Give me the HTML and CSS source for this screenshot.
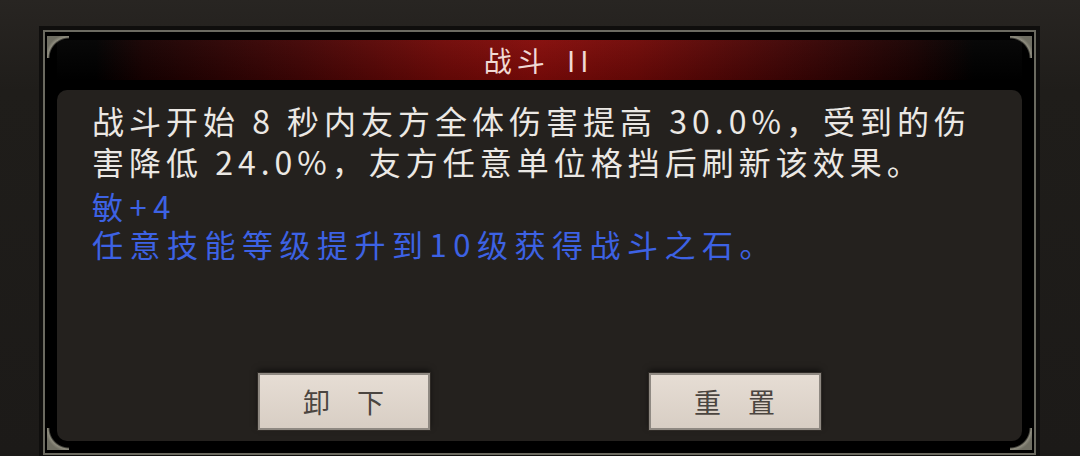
FILE: index.html
```html
<!DOCTYPE html>
<html lang="zh-CN">
<head>
    <meta charset="UTF-8">
    <meta name="viewport" content="width=device-width, initial-scale=1.0">
    <title>战斗 II</title>
    <link rel="stylesheet" href="styles.css">
</head>

<body>
    <div class="frame">
        <div class="frame-line">
            <div class="sheet">
                <!-- 标题栏 -->
                <div class="title-bar">
                    <span class="title">战斗 II</span>
                </div>

                <!-- 说明面板 -->
                <div class="panel">
                    <p class="desc">战斗开始 8 秒内友方全体伤害提高 30.0%，受到的伤害降低 24.0%，友方任意单位格挡后刷新该效果。</p>
                    <p class="bonus">敏+4<br>任意技能等级提升到10级获得战斗之石。</p>

                    <div class="actions">
                        <button class="btn">卸下</button>
                        <button class="btn">重置</button>
                    </div>
                </div>
            </div>
        </div>
    </div>
</body>
</html>
```

FILE: styles.css
```css
html, body {
    height: 456px;
    overflow: hidden;
}

body {
    margin: 0;
    padding: 26px 40px 0 39px;
    box-sizing: border-box;
    font-family: "Noto Sans CJK SC", "Noto Sans", sans-serif;
    background: linear-gradient(180deg, #282522 0%, #1f1d1a 20%, #1c1a18 100%);
}

.frame {
    border: 4px solid #0f0e0d;
    background-color: #000;
}

.frame-line {
    border: 2px solid #6b6a60;
    padding: 4px 2px 3px 2px;
    background-color: #000;
}

/* 四角的灰色装饰 */
.sheet {
    display: flex;
    flex-direction: column;
    height: 414px;
    box-sizing: border-box;
    padding: 4px 10px 9px 10px;
    background:
        radial-gradient(circle at 100% 100%, rgba(0,0,0,0) 19px, #8f8d7f 21px, #6f6e62 24px) top left / 22px 22px no-repeat,
        radial-gradient(circle at 0 100%, rgba(0,0,0,0) 19px, #8f8d7f 21px, #6f6e62 24px) top right / 22px 22px no-repeat,
        radial-gradient(circle at 100% 0, rgba(0,0,0,0) 19px, #8f8d7f 21px, #6f6e62 24px) bottom left / 22px 22px no-repeat,
        radial-gradient(circle at 0 0, rgba(0,0,0,0) 19px, #8f8d7f 21px, #6f6e62 24px) bottom right / 22px 22px no-repeat,
        #000;
}

.title-bar {
    height: 40px;
    display: flex;
    align-items: center;
    justify-content: center;
    background:
        linear-gradient(180deg, rgba(255,255,255,0.03), rgba(0,0,0,0.15)),
        linear-gradient(90deg,
            rgba(90,4,4,0) 0%,
            rgba(90,4,4,0) 4%,
            #180101 9%,
            #420505 25%,
            #700907 40%,
            #840b09 50%,
            #700907 60%,
            #420505 75%,
            #180101 89%,
            rgba(90,4,4,0) 95%);
}

.title {
    font-size: 28px;
    letter-spacing: 5px;
    word-spacing: 6px;
    color: #f0d9d4;
    margin-left: -2px;
}

.panel {
    flex: 1;
    display: flex;
    flex-direction: column;
    margin-top: 10px;
    padding: 10px 36px 11px 35px;
    background-color: #24211e;
    border-radius: 10px;
}

.desc {
    margin: 0;
    font-size: 32px;
    letter-spacing: 5px;
    line-height: 41px;
    color: #ebe8e4;
}

.bonus {
    margin: 5px 0 0 0;
    color: #3d62e4;
    font-size: 31px;
    letter-spacing: 6.5px;
    line-height: 38px;
}

.actions {
    display: flex;
    justify-content: center;
    gap: 219px;
    margin-top: auto;
}

.btn {
    width: 172px;
    height: 57px;
    padding: 0 0 0 27px;
    font-family: inherit;
    font-size: 27px;
    letter-spacing: 27px;
    color: #4b4540;
    background: linear-gradient(180deg, #e6ddd4, #d8cec4);
    border: 2px solid #8f8982;
    outline: 1px solid #2e2a26;
    box-shadow: 0 -3px 6px rgba(0, 0, 0, 0.6);
    cursor: pointer;
}
```
